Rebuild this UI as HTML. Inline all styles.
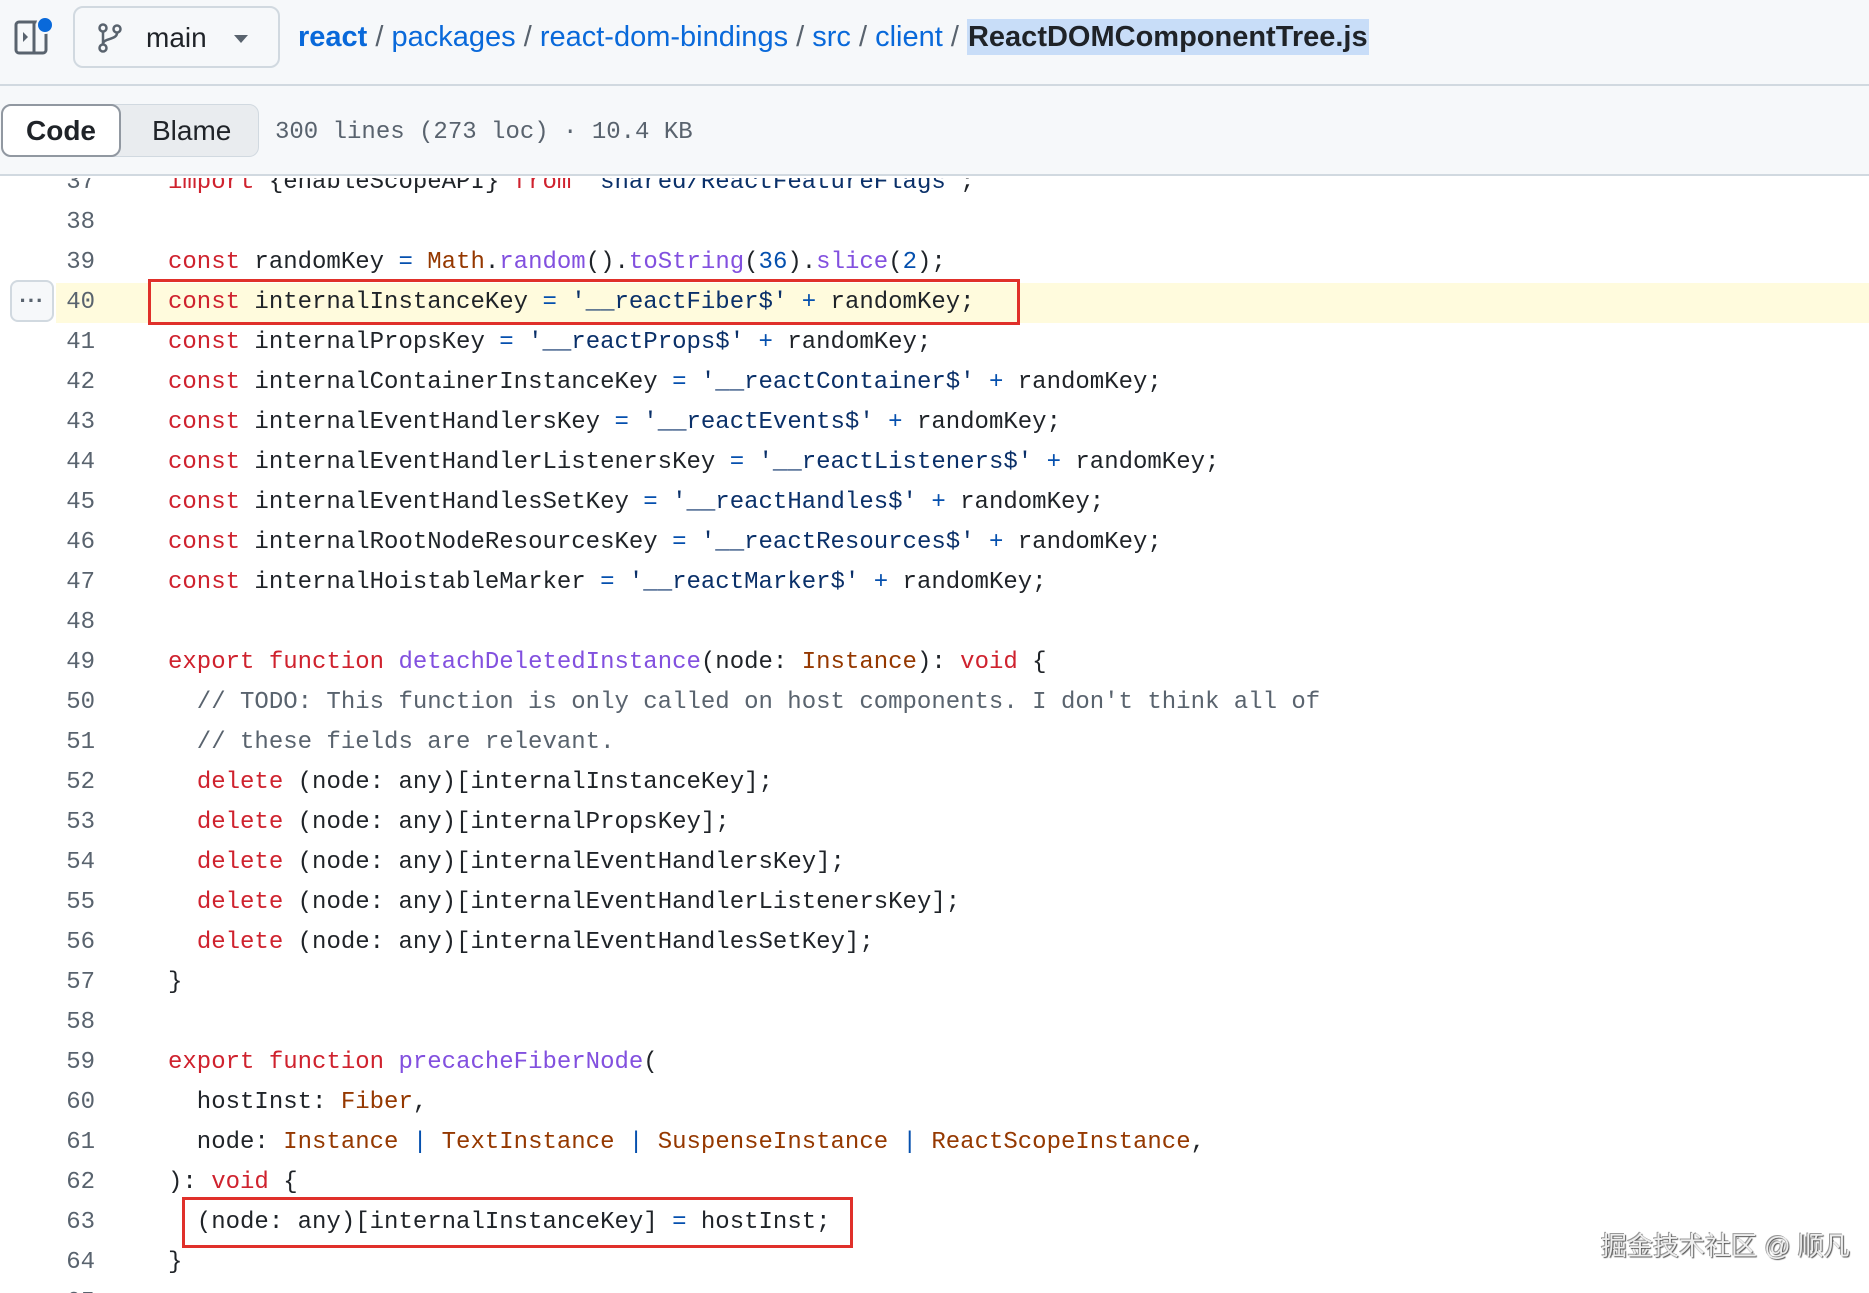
<!DOCTYPE html>
<html><head><meta charset="utf-8"><style>
*{margin:0;padding:0;box-sizing:border-box}
body{width:1869px;height:1293px;overflow:hidden;background:#fff;font-family:"Liberation Sans",sans-serif;position:relative}
.bar1{position:absolute;left:0;top:0;width:1869px;height:86px;background:#f6f8fa;border-bottom:2px solid #d1d9e0}
.bar2{position:absolute;left:0;top:86px;width:1869px;height:90px;background:#f6f8fa;border-bottom:2px solid #d1d9e0}
.branch{position:absolute;left:73px;top:6px;width:207px;height:62px;border:2px solid #d1d9e0;border-radius:10px;background:#f6f8fa}
.branch .t{position:absolute;left:71px;top:14px;font-size:28px;color:#1f2328}
.crumb{position:absolute;left:298px;top:21px;font-size:29px;color:#0969da;white-space:nowrap}
.crumb .s{color:#59636e}
.crumb .f{color:#1f2328;font-weight:bold;background:#c8ddf8;padding:2px 1px}
.seg{position:absolute;left:1px;top:104px;width:258px;height:53px;border-radius:10px;background:#e9ecef;border:1px solid #d1d9e0}
.code-btn{position:absolute;width:120px;height:53px;background:#fff;border:2px solid #9198a1;border-radius:10px;font-size:28px;font-weight:bold;color:#1f2328;text-align:center;line-height:49px;top:-1px;left:-1px}
.blame{position:absolute;left:150px;top:10px;font-size:28px;color:#1f2328}
.meta{position:absolute;left:275px;top:119px;font-family:"Liberation Mono",monospace;font-size:24px;color:#59636e;white-space:pre}
.code{position:absolute;left:0;top:178px;width:1869px;height:1115px;overflow:hidden}
.row{position:absolute;left:0;height:40px;width:1869px;font-family:"Liberation Mono",monospace;font-size:24px;line-height:40px;white-space:pre;color:#1f2328}
.row .n{position:absolute;right:1774px;width:60px;text-align:right;color:#59636e}
.row .c{position:absolute;left:168px}
.k{color:#cf222e}.fn{color:#8250df}.ty{color:#953800}.st{color:#0a3069}.o{color:#0550ae}.cm{color:#59636e}
.hl{background:#fffbdd}
.box{position:absolute;border:3px solid #e0302a}
.dots{position:absolute;left:10px;top:280px;width:44px;height:42px;border:2px solid #d1d9e0;border-radius:8px;background:#f6f8fa;font-size:22px;font-weight:bold;color:#59636e;text-align:center;line-height:38px;letter-spacing:1px}
.wm{position:absolute;left:1601px;top:1226px;font-family:"Liberation Sans","Noto Sans CJK SC",sans-serif;font-size:26px;color:#eee;text-shadow:1px 1px 1px #555,-1px -1px 0 #999;white-space:nowrap}
</style></head><body>
<div class="bar1">
<svg style="position:absolute;left:14px;top:16px" width="42" height="40" viewBox="0 0 42 40"><rect x="2" y="6" width="30" height="31" rx="3" fill="none" stroke="#59636e" stroke-width="3"/><line x1="20" y1="6" x2="20" y2="37" stroke="#59636e" stroke-width="3"/><path d="M9 16 l5 5 -5 5z" fill="#59636e"/><circle cx="31" cy="9" r="8" fill="#0969da" stroke="#f6f8fa" stroke-width="2"/></svg>
<div class="branch">
<svg style="position:absolute;left:22px;top:14px" width="26" height="32" viewBox="0 0 26 32"><circle cx="6" cy="6" r="3.5" fill="none" stroke="#59636e" stroke-width="2.5"/><circle cx="6" cy="26" r="3.5" fill="none" stroke="#59636e" stroke-width="2.5"/><circle cx="20" cy="7" r="3.5" fill="none" stroke="#59636e" stroke-width="2.5"/><line x1="6" y1="10" x2="6" y2="22" stroke="#59636e" stroke-width="2.5"/><path d="M20 11 c0 7 -14 5 -14 11" fill="none" stroke="#59636e" stroke-width="2.5"/></svg>
<div class="t">main</div>
<svg style="position:absolute;left:158px;top:26px" width="16" height="10"><path d="M1 1 h14 l-7 8z" fill="#59636e"/></svg>
</div>
<div class="crumb"><b>react</b> <span class="s">/</span> packages <span class="s">/</span> react-dom-bindings <span class="s">/</span> src <span class="s">/</span> client <span class="s">/</span> <span class="f">ReactDOMComponentTree.js</span></div>
</div>
<div class="bar2"></div>
<div class="seg"><div class="code-btn">Code</div><div class="blame">Blame</div></div>
<div class="meta">300 lines (273 loc) · 10.4 KB</div>
<div class="code">
<div class="row" style="top:-15px"><span class="n">37</span><span class="c"><span class="k">import</span> {enableScopeAPI} <span class="k">from</span> <span class="st">'shared/ReactFeatureFlags'</span>;</span></div>
<div class="row" style="top:25px"><span class="n">38</span></div>
<div class="row" style="top:65px"><span class="n">39</span><span class="c"><span class="k">const</span> randomKey <span class="o">=</span> <span class="ty">Math</span>.<span class="fn">random</span>().<span class="fn">toString</span>(<span class="o">36</span>).<span class="fn">slice</span>(<span class="o">2</span>);</span></div>
<div class="row hl" style="top:105px;left:56px"><span class="n" style="right:1830px">40</span><span class="c" style="left:112px"><span class="k">const</span> internalInstanceKey <span class="o">=</span> <span class="st">'__reactFiber$'</span> <span class="o">+</span> randomKey;</span></div>
<div class="row" style="top:145px"><span class="n">41</span><span class="c"><span class="k">const</span> internalPropsKey <span class="o">=</span> <span class="st">'__reactProps$'</span> <span class="o">+</span> randomKey;</span></div>
<div class="row" style="top:185px"><span class="n">42</span><span class="c"><span class="k">const</span> internalContainerInstanceKey <span class="o">=</span> <span class="st">'__reactContainer$'</span> <span class="o">+</span> randomKey;</span></div>
<div class="row" style="top:225px"><span class="n">43</span><span class="c"><span class="k">const</span> internalEventHandlersKey <span class="o">=</span> <span class="st">'__reactEvents$'</span> <span class="o">+</span> randomKey;</span></div>
<div class="row" style="top:265px"><span class="n">44</span><span class="c"><span class="k">const</span> internalEventHandlerListenersKey <span class="o">=</span> <span class="st">'__reactListeners$'</span> <span class="o">+</span> randomKey;</span></div>
<div class="row" style="top:305px"><span class="n">45</span><span class="c"><span class="k">const</span> internalEventHandlesSetKey <span class="o">=</span> <span class="st">'__reactHandles$'</span> <span class="o">+</span> randomKey;</span></div>
<div class="row" style="top:345px"><span class="n">46</span><span class="c"><span class="k">const</span> internalRootNodeResourcesKey <span class="o">=</span> <span class="st">'__reactResources$'</span> <span class="o">+</span> randomKey;</span></div>
<div class="row" style="top:385px"><span class="n">47</span><span class="c"><span class="k">const</span> internalHoistableMarker <span class="o">=</span> <span class="st">'__reactMarker$'</span> <span class="o">+</span> randomKey;</span></div>
<div class="row" style="top:425px"><span class="n">48</span></div>
<div class="row" style="top:465px"><span class="n">49</span><span class="c"><span class="k">export</span> <span class="k">function</span> <span class="fn">detachDeletedInstance</span>(node: <span class="ty">Instance</span>): <span class="k">void</span> {</span></div>
<div class="row" style="top:505px"><span class="n">50</span><span class="c"><span class="cm">  // TODO: This function is only called on host components. I don't think all of</span></span></div>
<div class="row" style="top:545px"><span class="n">51</span><span class="c"><span class="cm">  // these fields are relevant.</span></span></div>
<div class="row" style="top:585px"><span class="n">52</span><span class="c">  <span class="k">delete</span> (node: any)[internalInstanceKey];</span></div>
<div class="row" style="top:625px"><span class="n">53</span><span class="c">  <span class="k">delete</span> (node: any)[internalPropsKey];</span></div>
<div class="row" style="top:665px"><span class="n">54</span><span class="c">  <span class="k">delete</span> (node: any)[internalEventHandlersKey];</span></div>
<div class="row" style="top:705px"><span class="n">55</span><span class="c">  <span class="k">delete</span> (node: any)[internalEventHandlerListenersKey];</span></div>
<div class="row" style="top:745px"><span class="n">56</span><span class="c">  <span class="k">delete</span> (node: any)[internalEventHandlesSetKey];</span></div>
<div class="row" style="top:785px"><span class="n">57</span><span class="c">}</span></div>
<div class="row" style="top:825px"><span class="n">58</span></div>
<div class="row" style="top:865px"><span class="n">59</span><span class="c"><span class="k">export</span> <span class="k">function</span> <span class="fn">precacheFiberNode</span>(</span></div>
<div class="row" style="top:905px"><span class="n">60</span><span class="c">  hostInst: <span class="ty">Fiber</span>,</span></div>
<div class="row" style="top:945px"><span class="n">61</span><span class="c">  node: <span class="ty">Instance</span> <span class="o">|</span> <span class="ty">TextInstance</span> <span class="o">|</span> <span class="ty">SuspenseInstance</span> <span class="o">|</span> <span class="ty">ReactScopeInstance</span>,</span></div>
<div class="row" style="top:985px"><span class="n">62</span><span class="c">): <span class="k">void</span> {</span></div>
<div class="row" style="top:1025px"><span class="n">63</span><span class="c">  (node: any)[internalInstanceKey] <span class="o">=</span> hostInst;</span></div>
<div class="row" style="top:1065px"><span class="n">64</span><span class="c">}</span></div>
<div class="row" style="top:1105px"><span class="n">65</span></div>
</div>
<div class="dots">···</div>
<div class="box" style="left:148px;top:279px;width:872px;height:46px"></div>
<div class="box" style="left:182px;top:1197px;width:671px;height:51px"></div>
<div class="wm">掘金技术社区 @ 顺凡</div>
</body></html>
